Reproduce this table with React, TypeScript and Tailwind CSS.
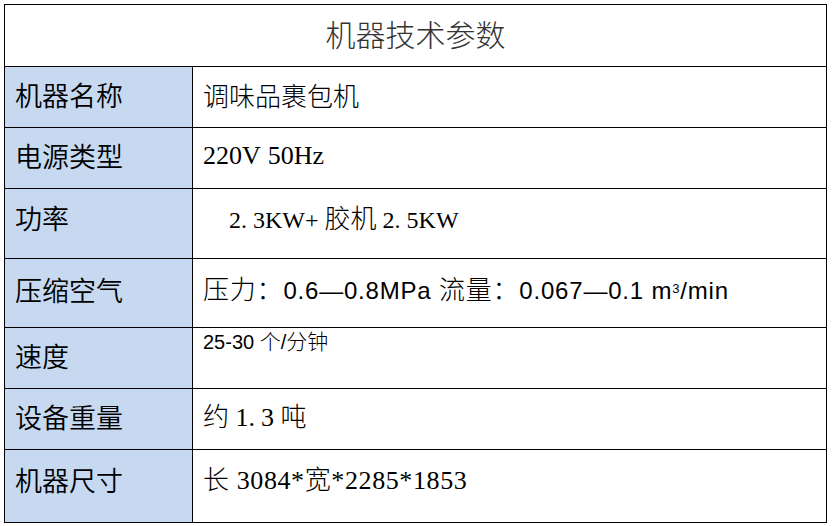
import React from 'react'

const cjkSans = '"Noto Sans CJK SC", sans-serif'
const serifMix = '"Liberation Serif", "Noto Sans CJK SC", serif'
const sansMix = '"Liberation Sans", "Noto Sans CJK SC", sans-serif'

type Row = { label: string; h: string; value: React.ReactNode; pad: string }

// thin CJK piece inside serif / sans runs
const Cjk = ({ children, cls = 'text-[26px]' }: { children: React.ReactNode; cls?: string }) => (
  <span className={`font-light ${cls}`} style={{ fontFamily: cjkSans }}>{children}</span>
)

const rows: Row[] = [
  { label: '机器名称', h: 'h-[61px]', pad: 'pb-[5px]', value: <Cjk>调味品裹包机</Cjk> },
  {
    label: '电源类型',
    h: 'h-[61px]',
    pad: 'pb-[5px]',
    value: (
      <span style={{ fontFamily: serifMix }} className="text-[26px]">
        220V<span className="inline-block w-[7px]" />50Hz
      </span>
    ),
  },
  {
    label: '功率',
    h: 'h-[70px]',
    pad: 'pb-[12px]',
    value: (
      <span style={{ fontFamily: serifMix }} className="pl-[26px] text-[24px]">
        2.<span className="inline-block w-[6px]" />3KW+ <Cjk>胶机</Cjk> 2.<span className="inline-block w-[6px]" />5KW
      </span>
    ),
  },
  {
    label: '压缩空气',
    h: 'h-[69px]',
    pad: 'pb-[8px]',
    value: (
      <span style={{ fontFamily: sansMix }} className="text-[24px] tracking-[0.8px]">
        <Cjk>压力：</Cjk>0.6—0.8MPa <Cjk>流量：</Cjk>0.067—0.1 m<sup className="text-[13px]">3</sup>/min
      </span>
    ),
  },
  {
    label: '速度',
    h: 'h-[61px]',
    pad: 'pb-[5px]',
    value: (
      <span style={{ fontFamily: sansMix }} className="text-[20px]">
        25-30 <Cjk cls="text-[21px]">个</Cjk>/<Cjk cls="text-[21px]">分钟</Cjk>
      </span>
    ),
  },
  {
    label: '设备重量',
    h: 'h-[61px]',
    pad: 'pb-[5px]',
    value: (
      <span style={{ fontFamily: serifMix }} className="text-[26px]">
        <Cjk>约</Cjk> 1.<span className="inline-block w-[6px]" />3 <Cjk>吨</Cjk>
      </span>
    ),
  },
  {
    label: '机器尺寸',
    h: 'h-[73px]',
    pad: 'pb-[13px]',
    value: (
      <span style={{ fontFamily: serifMix }} className="text-[26px] tracking-[0.6px]">
        <Cjk>长</Cjk> 3084*<Cjk>宽</Cjk>*2285*1853
      </span>
    ),
  },
]

export default function App() {
  return (
    <div className="w-[832px] h-[526px] bg-white p-1" style={{ fontFamily: cjkSans }}>
      <table className="w-[823px] border-collapse border border-black text-black">
        <tbody>
          <tr className="h-[62px]">
            <td colSpan={2} className="border border-black text-center align-middle text-[30px] font-light text-[#333] pb-[6px] leading-none">
              机器技术参数
            </td>
          </tr>
          {rows.map(r => (
            <tr key={r.label} className={r.h}>
              <td className={`w-[188px] border border-black bg-[#c6d9f1] pl-[10px] align-middle text-[27px] font-[350] leading-none ${r.pad}`}>
                {r.label}
              </td>
              {r.label === '速度' ? (
                <td className="border border-black pl-[10px] pt-[2px] align-top leading-none whitespace-nowrap">
                  {r.value}
                </td>
              ) : (
                <td className={`border border-black pl-[10px] align-middle leading-none whitespace-nowrap ${r.pad}`}>
                  {r.value}
                </td>
              )}
            </tr>
          ))}
        </tbody>
      </table>
    </div>
  )
}
